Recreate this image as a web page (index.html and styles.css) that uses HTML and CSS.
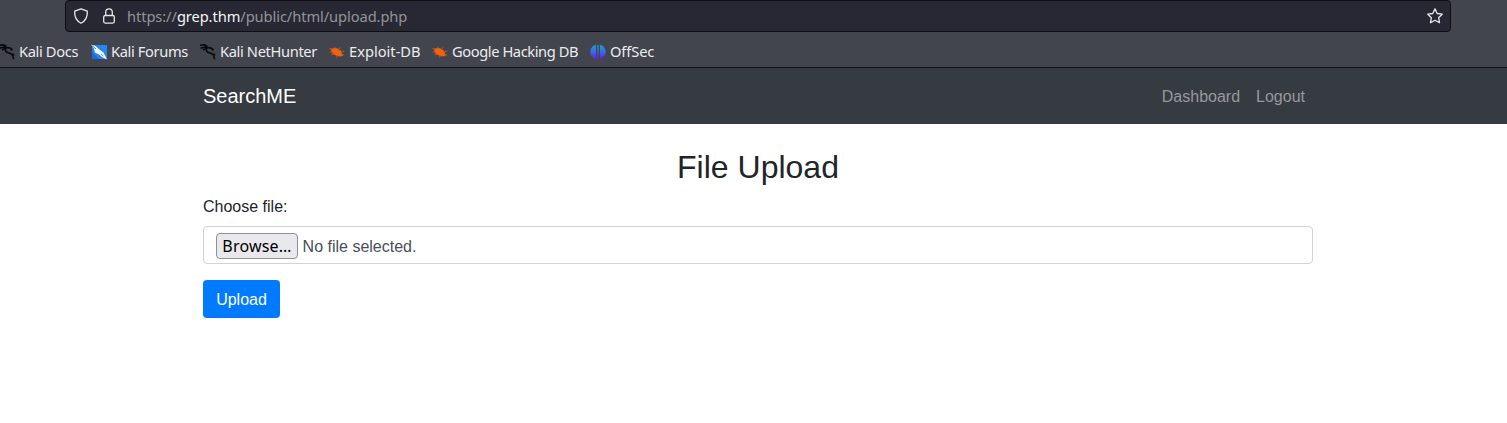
FILE: index.html
```html
<!DOCTYPE html>
<html lang="en">
<head>
<meta charset="utf-8">
<title>File Upload</title>
<link rel="stylesheet" href="styles.css">
</head>
<body>
<svg width="0" height="0" class="defs">
  <defs>
    <symbol id="dragon" viewBox="0 0 16 16"><path d="M0 1.200 4.500.8l3 1.700M.5 4.200 5 3l3 .8M3 6l3-1.500 3-.9 2.500.6 2 1.800-2-.6M6.500 5C6 7.200 7.200 8.200 9.500 8.800c3 .5 4.800 2.500 5 6.400M9.500 9l3 1 2.800.6" fill="none" stroke="#08090b" stroke-width="1.600"/></symbol>
    <symbol id="bug" viewBox="0 0 16 16"><path d="M2 5 5 4l3 .2 3.200 2L13 8.900l.8 3-3.600.5-3.200-.8-3.300-1.900L2.300 7z" fill="#f4600c"/><path d="M4 5.500.5 4.500M4 7.800.8 8.200M5 10l-2.500 1M6.500 5 5.500 2.700M9.500 5.800l1.500-2.500M11.500 8l3.800-.8M12 10.500l3.300.4M8.500 11l-.8 2.500" stroke="#c85a25" stroke-width=".9"/></symbol>
  </defs>
</svg>
<header class="browser">
  <div class="address">
    <svg class="icon shield" viewBox="0 0 16 16"><path d="M8 .8 14.300 3.200c.4 5.200-1.500 9.400-6.300 12C3.200 12.600 1.300 8.400 1.700 3.200z"/></svg>
    <svg class="icon lock" viewBox="0 0 16 16"><rect x="2.700" y="7.500" width="10.600" height="7.600" rx="1.500"/><path d="M4.700 7.500V4.200a3.300 3.300 0 0 1 6.600 0v3.300"/></svg>
    <span class="url">https://<b>grep.thm</b>/public/html/upload.php</span>
    <svg class="icon star" viewBox="0 0 16 16"><path d="m8 .9 2.200 4.600 5 .7-3.600 3.500.9 5L8 12.300l-4.500 2.400.9-5L.8 6.200l5-.7z"/></svg>
  </div>
  <nav class="bookmarks">
    <a class="docs"><svg><use href="#dragon"/></svg><span>Kali Docs</span></a>
    <a class="forums"><svg viewBox="0 0 16 16"><path fill="#2485f5" d="M1 1h15v14H1z"/><path fill="#176bdc" d="M1 8l7 7H1z"/><path d="M0 .500 4.500 2l4.500 4 3.500 2.500L16 15.500l-5-2.600L8 10.500 4 8.500l-1-4z" fill="#f8f8f8"/><path d="m1 1.500 4 3.500m5 5 2.500 2" stroke="#4d4d50" stroke-width=".7" fill="none"/></svg><span>Kali Forums</span></a>
    <a class="hunter"><svg><use href="#dragon"/></svg><span>Kali NetHunter</span></a>
    <a class="exploit"><svg><use href="#bug"/></svg><span>Exploit-DB</span></a>
    <a class="google"><svg><use href="#bug"/></svg><span>Google Hacking DB</span></a>
    <a class="offsec"><svg viewBox="0 0 16 16"><defs><linearGradient id="g" gradientUnits="userSpaceOnUse" x1="0" y1="0" x2="0" y2="16"><stop stop-color="#16a5cf"/><stop offset=".5" stop-color="#3b69e4"/><stop offset="1" stop-color="#6d16d4"/></linearGradient></defs><path fill="url(#g)" d="M6 .7v14.200C2 14 .3 11 .3 7.800S2.500 1.500 6 .7zM7.300 1h1.400v14.800H7.300zM10 .7c3.500.8 5.700 3.900 5.700 7.100S14 14 10 14.900z"/></svg><span>OffSec</span></a>
  </nav>
</header>
<div class="navbar">
  <div class="container">
    <a class="brand">SearchME</a>
    <nav class="links"><a>Dashboard</a><a>Logout</a></nav>
  </div>
</div>
<main class="content">
  <h2>File Upload</h2>
  <form>
    <label>Choose file:</label>
    <div class="file"><button type="button" class="browse">Browse…</button><span>No file selected.</span></div>
    <button type="button" class="upload">Upload</button>
  </form>
</main>
</body>
</html>
```
FILE: styles.css
```css
* { box-sizing: border-box; }
body { margin: 0; background: #fff; color: #212529; font: 16px/24px "Liberation Sans", Arial, sans-serif; overflow: hidden; }
.defs { display: block; height: 0; }
.browser { height: 68px; background: #42454e; border-bottom: 1px solid #101115; font-family: "Noto Sans", sans-serif; color: #ececee; }
.address { height: 32px; width: 1386px; margin-left: 65px; padding: 0 7px; display: flex; align-items: center; background: #272833; border: 1px solid #0d0e12; border-radius: 4px; }
.icon { width: 16px; height: 16px; fill: none; stroke: #e8e8ea; stroke-width: 1.3; stroke-linejoin: round; flex: none; }
.lock { margin-left: 12px; }
.url { margin-left: 10px; font-size: 14.67px; letter-spacing: -.08px; color: #94959a; white-space: nowrap; }
.url b { font-weight: 400; color: #f5f5f7; }
.star { margin-left: auto; }
.bookmarks { height: 35px; display: flex; align-items: center; padding-top: 4px; }
.bookmarks a { display: flex; align-items: center; gap: 4px; font-size: 14.67px; line-height: 20px; letter-spacing: -.36px; white-space: nowrap; flex: none; }
.bookmarks svg { width: 16px; height: 16px; flex: none; }
.bookmarks span { margin-top: -2px; }
.docs { width: 92px; margin-left: -1px; }
.forums { width: 109px; }
.hunter { width: 129px; }
.bookmarks .exploit { width: 103px; letter-spacing: 0; }
.bookmarks .google { width: 158px; letter-spacing: -.41px; }
.bookmarks .offsec { letter-spacing: -.1px; }
.navbar { height: 56px; background: #363a41; }
.container { width: 1110px; height: 56px; margin-left: 203px; display: flex; align-items: center; justify-content: space-between; }
.brand { font-size: 20px; color: #fff; }
.links { display: flex; gap: 16px; padding: 2px 8px 0 0; color: #97999c; }
.content { width: 1110px; margin: 24px auto 0 203px; }
h2 { margin: 0 0 8px; font-size: 32px; line-height: 38.4px; font-weight: 400; text-align: center; }
label { display: block; padding-top: 1px; margin-bottom: 7px; }
.file { height: 38px; border: 1px solid #ced4da; border-radius: 4px; padding: 2px 12px 0; display: flex; align-items: center; gap: 5px; color: #495057; }
.file span { margin-left: -.4px; padding-top: 2px; }
.browse { width: 82px; height: 26px; padding: 0; border: 1px solid #8f8f9d; border-radius: 4px; background: #e9e9ed; color: #000; font: 16px/22px "Noto Sans", sans-serif; letter-spacing: .2px; }
.upload { display: block; width: 77px; height: 38px; margin-top: 16px; padding: 2px 0 0; border: 0; border-radius: 4px; background: #007bff; color: #fff; font: inherit; }
```
